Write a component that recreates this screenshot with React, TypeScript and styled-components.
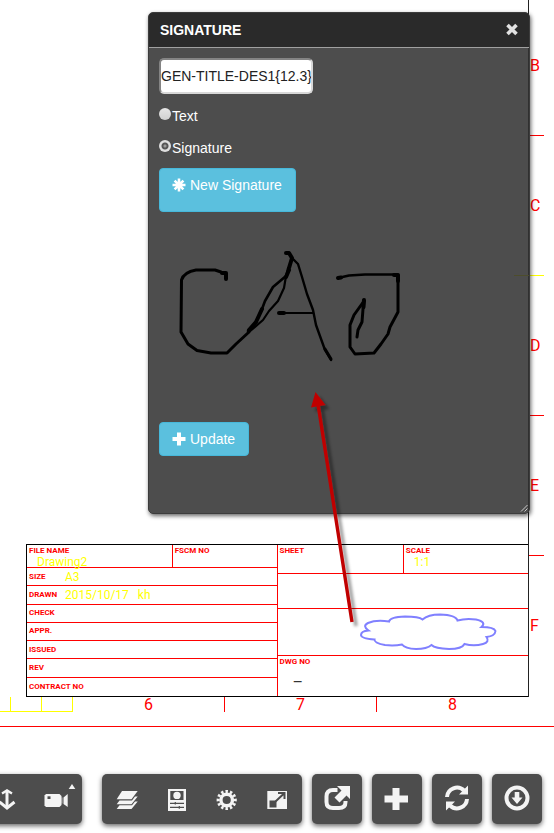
import React, { useState } from "react";
import styled, { createGlobalStyle } from "styled-components";

const GlobalStyle = createGlobalStyle`
  *, *::before, *::after { box-sizing: border-box; }
  body {
    margin: 0;
    background: #fff;
    font-family: "Liberation Sans", Arial, sans-serif;
    font-size: 14px;
    line-height: 20px;
  }
`;

const RED = "#ff0000";
const YELLOW = "#ffff00";
const CAD_FONT = `Roboto, "Liberation Sans", sans-serif`;

const Page = styled.div`
  position: relative;
  display: flex;
  flex-direction: column;
  min-height: 100vh;
  overflow: hidden;
`;

/* ---------- drawing sheet ---------- */

const Sheet = styled.main`
  display: grid;
  grid-template-columns: minmax(0, 1fr) 25px;
  border-bottom: 1px solid ${RED};
`;

const DrawingArea = styled.div`
  display: flex;
  flex-direction: column;
  justify-content: flex-end;
  border-right: 1px solid #222;
`;

const RowZones = styled.div`
  display: flex;
  flex-direction: column;
  font: 400 16px/20px ${CAD_FONT};
  color: ${RED};
`;

const RowZone = styled.div<{ $size?: number; $tick?: string; $long?: boolean }>`
  display: flex;
  align-items: center;
  width: ${(p) => (p.$long ? 30 : 15)}px;
  height: ${(p) => p.$size ?? 140}px;
  margin-left: ${(p) => (p.$long ? -15 : 0)}px;
  padding-left: ${(p) => (p.$long ? 16 : 1)}px;
  border-bottom: 1px solid ${(p) => p.$tick ?? "transparent"};
  &:first-child { padding-bottom: 4px; }
`;

const ColumnZones = styled.div`
  display: flex;
  height: 29px;
  min-width: 0;
  align-items: flex-start;
  font: 400 16px/16px ${CAD_FONT};
  color: ${RED};
`;

const RevisionStrip = styled.div`
  flex: 1;
  display: flex;
  justify-content: flex-end;
  height: 15px;
  min-width: 0;
  overflow: hidden;
  border-bottom: 1px solid ${YELLOW};
`;

const RevisionCell = styled.div`
  flex: none;
  width: 31px;
  border-right: 1px solid ${YELLOW};
`;

const ColumnZone = styled.div<{ $last?: boolean }>`
  flex: none;
  width: 152px;
  height: 15px;
  text-align: center;
  border-right: 1px solid ${(p) => (p.$last ? "transparent" : RED)};
`;

const TitleBlock = styled.section`
  display: grid;
  grid-template-columns: 1fr 1fr;
  height: 153px;
  margin-left: 26px;
  border: 1px solid #000;
  border-right: 0;
  font-family: ${CAD_FONT};
  color: ${RED};
`;

const LeftHalf = styled.div`
  display: grid;
  grid-template-rows: 23px repeat(7, 1fr);
  border-right: 1px solid ${RED};
`;

const RightHalf = styled.div`
  display: grid;
  grid-template-rows: 29px 35px 47px 1fr;
`;

const BlockRow = styled.div<{ $columns?: string }>`
  display: grid;
  grid-template-columns: ${(p) => p.$columns ?? "1fr"};
  min-height: 0;
  border-bottom: 1px solid ${RED};
  &:last-child { border-bottom: 0; }
`;

const BlockCell = styled.div<{ $inline?: boolean }>`
  display: flex;
  flex-direction: ${(p) => (p.$inline ? "row" : "column")};
  align-items: ${(p) => (p.$inline ? "center" : "stretch")};
  padding: ${(p) => (p.$inline ? "0 0 0 2px" : "1px 0 0 2px")};
  min-width: 0;
  & + & { border-left: 1px solid ${RED}; }
`;

const Caption = styled.span<{ $fixed?: boolean }>`
  width: ${(p) => (p.$fixed ? "36px" : "auto")};
  font-size: 8px;
  font-weight: 700;
  line-height: 10px;
  white-space: nowrap;
`;

const Entry = styled.span<{ $indent?: number }>`
  padding-left: ${(p) => p.$indent ?? 0}px;
  font-size: 12px;
  line-height: 12px;
  color: ${YELLOW};
  white-space: pre;
`;

const DrawingNumber = styled.span`
  padding: 8px 0 0 13px;
  font-size: 16px;
  line-height: 16px;
  color: #333;
`;

const CloudCell = styled.div`
  display: flex;
  align-items: center;
  justify-content: flex-end;
  padding-right: 31px;
`;

/* ---------- signature dialog ---------- */

const Dialog = styled.section`
  position: absolute;
  top: 12px;
  right: 24px;
  width: 382px;
  border: 1px solid #3c3c3c;
  border-radius: 5px;
  background: rgba(51, 51, 51, 0.87);
  color: #fff;
  box-shadow: 1px 2px 4px rgba(0, 0, 0, 0.6);
`;

const DialogHeader = styled.header`
  display: flex;
  align-items: center;
  justify-content: space-between;
  height: 35px;
  padding: 0 10px 0 11px;
  border-bottom: 1px solid #a0a0a0;
  border-radius: 4px 4px 0 0;
  background: #2a2a2a;
`;

const DialogTitle = styled.h1`
  margin: 0;
  font-size: 14px;
  line-height: 20px;
`;

const CloseButton = styled.button`
  display: flex;
  padding: 0;
  border: 0;
  background: none;
  cursor: pointer;
`;

const DialogBody = styled.form`
  display: flex;
  flex-direction: column;
  align-items: flex-start;
  padding: 10px 10px 57px;
`;

const TagInput = styled.input`
  width: 154px;
  height: 36px;
  padding: 0;
  border: 2px inset #d8d8d8;
  border-radius: 5px;
  background: #fff;
  color: #222;
  font: 14px/20px "Liberation Sans", Arial, sans-serif;
`;

const Choice = styled.label`
  display: flex;
  align-items: center;
  gap: 1px;
  height: 20px;
  margin-top: 12px;
`;

const Radio = styled.input`
  appearance: none;
  width: 12px;
  height: 12px;
  margin: 0 0 4px;
  border-radius: 50%;
  background: linear-gradient(#e6e6e6, #d0d0d0);
  &:checked {
    background: radial-gradient(circle, #999 0 1px, #555 2px 3px, #dedede 4px);
  }
`;

const ActionButton = styled.button<{ $tall?: boolean }>`
  display: flex;
  align-items: flex-start;
  gap: 4px;
  height: ${(p) => (p.$tall ? 44 : 34)}px;
  margin-top: ${(p) => (p.$tall ? 10 : 0)}px;
  padding: 6px 13px 6px 12px;
  border: 1px solid #46b8da;
  border-radius: 4px;
  background: #5bc0de;
  color: #fff;
  font: 14px/20px "Liberation Sans", Arial, sans-serif;
  cursor: pointer;
  svg { margin-top: 3px; }
`;

const SignaturePad = styled.div`
  height: 210px;
  svg { display: block; }
`;

const ResizeGrip = styled.svg`
  position: absolute;
  right: 1px;
  bottom: 1px;
`;

const Pointer = styled.svg`
  position: absolute;
  top: 385px;
  right: 184px;
  pointer-events: none;
`;

/* ---------- toolbar ---------- */

const Toolbar = styled.nav`
  display: flex;
  justify-content: flex-end;
  gap: 10px;
  padding: 47px 12px 9px;
`;

const ToolGroup = styled.div<{ $spaced?: boolean }>`
  display: flex;
  flex: none;
  margin-right: ${(p) => (p.$spaced ? 10 : 0)}px;
  border-radius: 5px;
  background: #4d4d4d;
  box-shadow: 0 2px 5px rgba(0, 0, 0, 0.6);
`;

const ToolButton = styled.button`
  display: block;
  width: 50px;
  height: 50px;
  padding: 0;
  border: 0;
  background: none;
  cursor: pointer;
  svg { display: block; }
`;

const LIGHT = "#f4f4f4";
const DARK = "#4d4d4d";

const icons = {
  move: (
    <g fill="none" stroke={LIGHT}>
      <path d="M25 17V33" strokeWidth="3" />
      <path d="M20 19.5L25 16.5L30 19.5" strokeWidth="2.4" />
      <path d="M17.5 28L25 34L32.5 28" strokeWidth="3" />
    </g>
  ),
  camera: (
    <g fill={LIGHT}>
      <path d="M14 20h13.5l2 2v9l-2 2H14l-1.500-1.500V21.500z" />
      <path d="M31.500 23.500L35.700 20V33L31.500 30z" />
      <path d="M29.500 23.500h1v6h-1z" opacity=".6" />
      <path d="M15.500 22.300h3v2.700h-3z" fill={DARK} />
      <path d="M36.700 15L40 10L43.300 15z" />
    </g>
  ),
  layers: (
    <g fill={LIGHT}>
      <path d="M20 17h15.700L29.500 25.300H14.700z" />
      <path d="M14.700 30.200L17.500 26.400H30L33 22.600H35.700L29.500 30.200z" />
      <path d="M14.700 35L17.500 31.300H30L33 27.500H35.700L29.500 35z" />
    </g>
  ),
  sheetSet: (
    <g>
      <path d="M16 15h18v22H16z" fill={LIGHT} />
      <path d="M18.300 17h13.200v9H18.300z" fill={DARK} />
      <circle cx="25" cy="21.400" r="3.700" fill={LIGHT} />
      <path d="M18 29.300H32M18 33.400H32M23.300 28v2.600M27.300 32v2.800" stroke={DARK} strokeWidth="1.200" />
    </g>
  ),
  gear: (
    <g fill="none" stroke={LIGHT}>
      <circle cx="24.700" cy="26" r="5.800" strokeWidth="3.400" />
      <circle cx="24.700" cy="26" r="8.600" strokeWidth="3" pathLength="240" strokeDasharray="11 9" strokeDashoffset="5.500" />
    </g>
  ),
  resize: (
    <g>
      <path d="M15.300 17H35V35H15.300z" fill={LIGHT} />
      <path d="M17.500 26.500H24.500V33.500H17.500z" fill={DARK} />
      <path d="M23.500 27.500L32 19.500M26 19H32.500V25" fill="none" stroke={DARK} strokeWidth="2" />
    </g>
  ),
  exportIcon: (
    <g>
      <path d="M25.500 16H21Q14.500 16 14.500 22.500V28Q14.500 34 21 34H27Q33.500 34 33.500 28V27" fill="none" stroke={LIGHT} strokeWidth="4" />
      <path d="M25 12H38V25L34.500 21.500L27.500 28.500L22.500 23.500L29.500 16.500z" fill={LIGHT} />
      <path d="M24.500 12.500L28.500 16.500L22 23" fill="none" stroke={DARK} strokeWidth="1" />
    </g>
  ),
  plus: <path d="M20.500 14h7v7.500H36v7H27.500V36h-7V28.500H12.500v-7h8z" fill={LIGHT} />,
  refresh: (
    <g>
      <path d="M15 23A10 10 0 0 1 32 16.500M35 25A10 10 0 0 1 18 31.500" fill="none" stroke={LIGHT} strokeWidth="4" />
      <path d="M36 11.500V20.500H27zM14 36.500V27.500H23z" fill={LIGHT} />
    </g>
  ),
  download: (
    <g>
      <circle cx="25" cy="24" r="10.500" fill="none" stroke={LIGHT} strokeWidth="4" />
      <path d="M22.700 18h4.600v5.500H30.500L25 30L19.500 23.500h3.200z" fill={LIGHT} />
    </g>
  ),
};

type IconName = keyof typeof icons;

const toolGroups: { spaced?: boolean; tools: [IconName, string][] }[] = [
  { spaced: true, tools: [["move", "Move"], ["camera", "Camera"]] },
  { tools: [["layers", "Layers"], ["sheetSet", "Properties"], ["gear", "Settings"], ["resize", "Full screen"]] },
  { tools: [["exportIcon", "Export"]] },
  { tools: [["plus", "Add"]] },
  { tools: [["refresh", "Refresh"]] },
  { tools: [["download", "Download"]] },
];

const Cloud = () => (
  <svg width="138" height="38" viewBox="359 614 138 38" fill="none" stroke="#8080ff" strokeWidth="2" aria-hidden="true">
    <path d="M389 622.500Q390 618 405 617.500Q419 617.500 422.500 620.500Q428 615.500 440 615.500Q456 616 457.500 621.500Q466 619 476 620.500Q487 623 481.500 628Q494 628 495.500 632Q495 637 486.500 638Q490 643 483 645Q474 647.500 464.500 645Q462 650 449 650Q435 649.500 431.500 646Q427 650 416 650Q405 649.500 402 645.500Q394 647 385 646Q374 644 374.500 640.500Q361 639.500 361 636Q361 632 368.500 631.500Q362 627 368 624Q376 620.500 389 622.500z" />
  </svg>
);

const Signature = () => (
  <svg width="250" height="160" viewBox="159 212 250 160" fill="none" stroke="#000" strokeLinecap="round" strokeLinejoin="round" role="img" aria-label="Drawn signature">
    <path d="M221 272L215 270L196 270Q184 272 181.500 280L181 332L188 344L197 350.500L211 353L227 353L236 344L249 332" strokeWidth="3" />
    <path d="M226 279V273H222" strokeWidth="4" />
    <path d="M248 331L256 322L262 309L265 301L273 287L286 276" strokeWidth="2.600" />
    <path d="M249 330L256 322L262 309" strokeWidth="4" />
    <path d="M286 277L289 270M286 253H289L292 258L289 268" strokeWidth="4" />
    <path d="M288 268L286 276L284 288L278 301L269 311L263 320L249 332" strokeWidth="2.200" />
    <path d="M293 259L298 264L302 277L307 294L313 310L316 325L325 350L331 360" strokeWidth="2.400" />
    <path d="M325 349L331 359" strokeWidth="3" />
    <path d="M279 313H313" strokeWidth="2" />
    <path d="M279 313H284" strokeWidth="4" />
    <path d="M338 278L349 275.500L365 274.500H397" strokeWidth="2.600" />
    <path d="M338 278L341 277.500M394 275L398 275V281" strokeWidth="4" />
    <path d="M398 275V312L390 327L388 334L381 344L374 353L355 354L350 347V325L354 315L364 301" strokeWidth="3" />
    <path d="M364 301L363 309L362 322L358 330L357 337" strokeWidth="3" />
    <path d="M364 300L363.500 307" strokeWidth="4" />
  </svg>
);

export default function App() {
  const [tag, setTag] = useState("GEN-TITLE-DES1{12.3}");
  const [mode, setMode] = useState("signature");

  return (
    <Page>
      <GlobalStyle />
      <Sheet>
        <DrawingArea>
          <TitleBlock>
            <LeftHalf>
              <BlockRow $columns="145fr 105fr">
                <BlockCell>
                  <Caption>FILE NAME</Caption>
                  <Entry $indent={8}>Drawing2</Entry>
                </BlockCell>
                <BlockCell><Caption>FSCM NO</Caption></BlockCell>
              </BlockRow>
              <BlockRow>
                <BlockCell $inline><Caption $fixed>SIZE</Caption><Entry>A3</Entry></BlockCell>
              </BlockRow>
              <BlockRow>
                <BlockCell $inline><Caption $fixed>DRAWN</Caption><Entry>2015/10/17{"   "}kh</Entry></BlockCell>
              </BlockRow>
              {["CHECK", "APPR.", "ISSUED", "REV", "CONTRACT NO"].map((name) => (
                <BlockRow key={name}>
                  <BlockCell $inline><Caption>{name}</Caption></BlockCell>
                </BlockRow>
              ))}
            </LeftHalf>
            <RightHalf>
              <BlockRow $columns="1fr 1fr">
                <BlockCell><Caption>SHEET</Caption></BlockCell>
                <BlockCell>
                  <Caption>SCALE</Caption>
                  <Entry $indent={8}>1:1</Entry>
                </BlockCell>
              </BlockRow>
              <BlockRow />
              <BlockRow><CloudCell><Cloud /></CloudCell></BlockRow>
              <BlockRow>
                <BlockCell>
                  <Caption>DWG NO</Caption>
                  <DrawingNumber>–</DrawingNumber>
                </BlockCell>
              </BlockRow>
            </RightHalf>
          </TitleBlock>
        </DrawingArea>
        <RowZones>
          <RowZone $size={136} $tick={RED}>B</RowZone>
          <RowZone $tick={YELLOW} $long>C</RowZone>
          <RowZone $tick={RED}>D</RowZone>
          <RowZone $tick={RED}>E</RowZone>
          <RowZone $size={141}>F</RowZone>
        </RowZones>
        <ColumnZones>
          <RevisionStrip>
            <RevisionCell /><RevisionCell /><RevisionCell />
          </RevisionStrip>
          <ColumnZone>6</ColumnZone>
          <ColumnZone>7</ColumnZone>
          <ColumnZone $last>8</ColumnZone>
        </ColumnZones>
      </Sheet>

      <Toolbar aria-label="Drawing tools">
        {toolGroups.map((group) => (
          <ToolGroup key={group.tools[0][0]} $spaced={group.spaced}>
            {group.tools.map(([icon, label]) => (
              <ToolButton key={icon} type="button" aria-label={label}>
                <svg width="50" height="50" viewBox="0 0 50 50" aria-hidden="true">{icons[icon]}</svg>
              </ToolButton>
            ))}
          </ToolGroup>
        ))}
      </Toolbar>

      <Dialog role="dialog" aria-labelledby="dialog-title">
        <DialogHeader>
          <DialogTitle id="dialog-title">SIGNATURE</DialogTitle>
          <CloseButton type="button" aria-label="Close">
            <svg width="14" height="14" viewBox="0 0 14 14" aria-hidden="true">
              <path d="M2.500 2L11.500 11M11.500 2L2.500 11" stroke="#e2e2e2" strokeWidth="3.600" />
            </svg>
          </CloseButton>
        </DialogHeader>
        <DialogBody onSubmit={(e) => e.preventDefault()}>
          <TagInput aria-label="Attribute tag" value={tag} onChange={(e) => setTag(e.target.value)} />
          <Choice>
            <Radio type="radio" name="mode" checked={mode === "text"} onChange={() => setMode("text")} />
            Text
          </Choice>
          <Choice>
            <Radio type="radio" name="mode" checked={mode === "signature"} onChange={() => setMode("signature")} />
            Signature
          </Choice>
          <ActionButton type="button" $tall>
            <svg width="14" height="14" viewBox="0 0 14 14" aria-hidden="true">
              <path d="M7 .5V13.500M.5 7H13.500M2.600 2.600L11.400 11.400M11.400 2.600L2.600 11.400" stroke="#fff" strokeWidth="2.600" />
            </svg>
            New Signature
          </ActionButton>
          <SignaturePad><Signature /></SignaturePad>
          <ActionButton type="submit">
            <svg width="14" height="14" viewBox="0 0 14 14" aria-hidden="true">
              <path d="M7 .5V13.500M.5 7H13.500" stroke="#fff" strokeWidth="4" />
            </svg>
            Update
          </ActionButton>
        </DialogBody>
        <ResizeGrip width="8" height="8" viewBox="0 0 8 8" aria-hidden="true">
          <path d="M1 7.500L7.500 1M4.500 7.500L7.500 4.500" stroke="#ccc" />
        </ResizeGrip>
      </Dialog>

      <Pointer width="70" height="250" viewBox="300 385 70 250" aria-hidden="true">
        <defs>
          <filter id="soft" x="-50%" y="-10%" width="200%" height="120%">
            <feDropShadow dx="4" dy="4" stdDeviation="1.500" floodColor="#000" floodOpacity=".4" />
          </filter>
        </defs>
        <g filter="url(#soft)">
          <path d="M318 404L352 622" stroke="#c00000" strokeWidth="3.400" />
          <path d="M315.500 392L311 407.500L325.500 405z" fill="#c00000" />
        </g>
      </Pointer>
    </Page>
  );
}
